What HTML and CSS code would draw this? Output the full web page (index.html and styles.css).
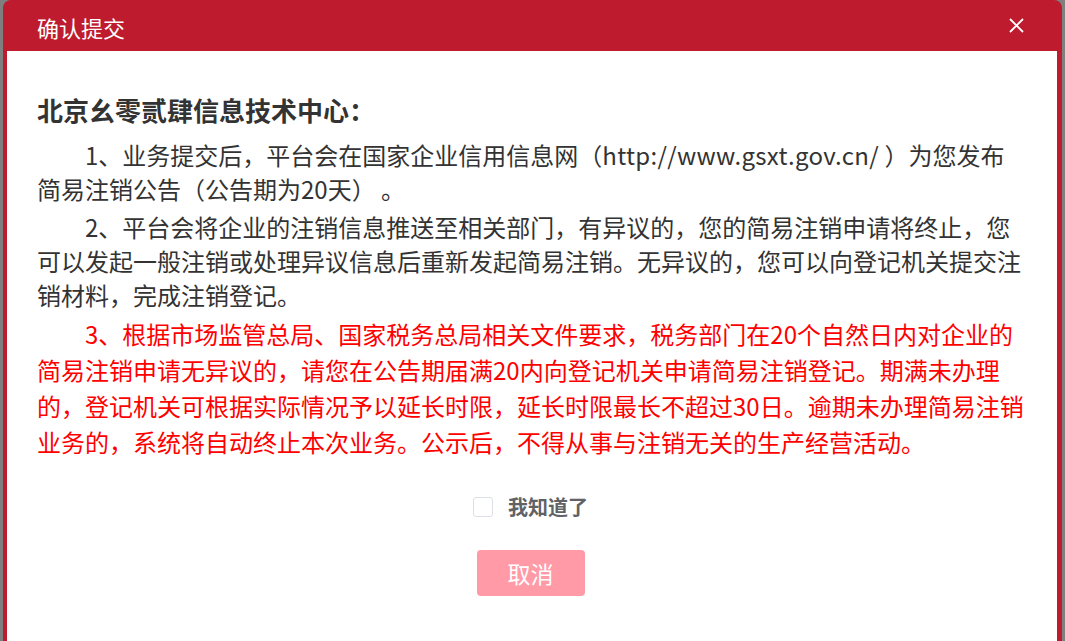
FILE: index.html
```html
<!DOCTYPE html>
<html lang="zh-CN">
<head>
<meta charset="utf-8">
<title>确认提交</title>
<link rel="stylesheet" href="styles.css">
</head>
<body>
<div class="dialog">
  <div class="dialog-header">
    <span class="dialog-title">确认提交</span>
    <svg class="close" width="15" height="15" viewBox="0 0 15 15"><path d="M1 1 L14 14 M14 1 L1 14" stroke="#fff" stroke-width="1.8" fill="none"/></svg>
  </div>
  <div class="dialog-body">
    <h2 class="org">北京幺零贰肆信息技术中心：</h2>
    <p class="para">1、业务提交后，平台会在国家企业信用信息网（<span class="url">http://www.gsxt.gov.cn/ </span>）为您发布简易注销公告（公告期为20天）&nbsp;。</p>
    <p class="para">2、平台会将企业的注销信息推送至相关部门，有异议的，您的简易注销申请将终止，您可以发起一般注销或处理异议信息后重新发起简易注销。无异议的，您可以向登记机关提交注销材料，完成注销登记。</p>
    <p class="para warn">3、根据市场监管总局、国家税务总局相关文件要求，税务部门在20个自然日内对企业的简易注销申请无异议的，请您在公告期届满20内向登记机关申请简易注销登记。期满未办理的，登记机关可根据实际情况予以延长时限，延长时限最长不超过30日。逾期未办理简易注销业务的，系统将自动终止本次业务。公示后，不得从事与注销无关的生产经营活动。</p>
    <label class="agree"><span class="box"></span><span class="agree-text">我知道了</span></label>
    <div class="actions"><button class="btn-cancel">取消</button></div>
  </div>
</div>
</body>
</html>
```
FILE: styles.css
```css
html, body {
  margin: 0;
  padding: 0;
}
body {
  background: #7f7f7f;
  height: 641px;
  overflow: hidden;
  font-family: "Noto Sans CJK SC", "Microsoft YaHei", sans-serif;
}
.dialog {
  margin: 0 3px;
  height: 641px;
  background: #be1b2e;
  border-radius: 8px 8px 0 0;
  padding: 0 5px 0 4px;
  display: flex;
  flex-direction: column;
  box-sizing: border-box;
}
.dialog-header {
  height: 51px;
  flex: none;
  display: flex;
  align-items: center;
  justify-content: space-between;
  padding: 0 33px 0 30px;
}
.dialog-title {
  color: #fff;
  font-size: 22px;
  line-height: 30px;
  margin-top: 3px;
}
.close {
  display: block;
}
.dialog-body {
  flex: 1;
  background: #fff;
  padding: 42px 33px 0 30px;
  color: #333;
}
.org {
  margin: 0 0 11px;
  font-size: 26px;
  line-height: 34px;
  font-weight: bold;
  color: #333;
}
.para {
  margin: 0;
  font-size: 24px;
  line-height: 34px;
  text-indent: 2em;
}
.url {
  letter-spacing: 0.3px;
}
.para + .para {
  margin-top: 4px;
}
.warn {
  color: #f00;
  line-height: 36px;
}
.agree {
  display: flex;
  align-items: center;
  justify-content: center;
  margin-top: 36px;
}
.box {
  width: 20px;
  height: 20px;
  box-sizing: border-box;
  border: 1px solid #dcdfe6;
  border-radius: 3px;
  margin-right: 15px;
}
.agree-text {
  font-size: 20px;
  font-weight: bold;
  color: #606266;
  line-height: 21px;
}
.actions {
  display: flex;
  justify-content: center;
  margin-top: 33px;
}
.btn-cancel {
  width: 108px;
  height: 46px;
  border: none;
  border-radius: 4px;
  background: #ff9aa6;
  color: #fff;
  font-size: 23px;
  font-family: inherit;
  padding: 0;
}
```
